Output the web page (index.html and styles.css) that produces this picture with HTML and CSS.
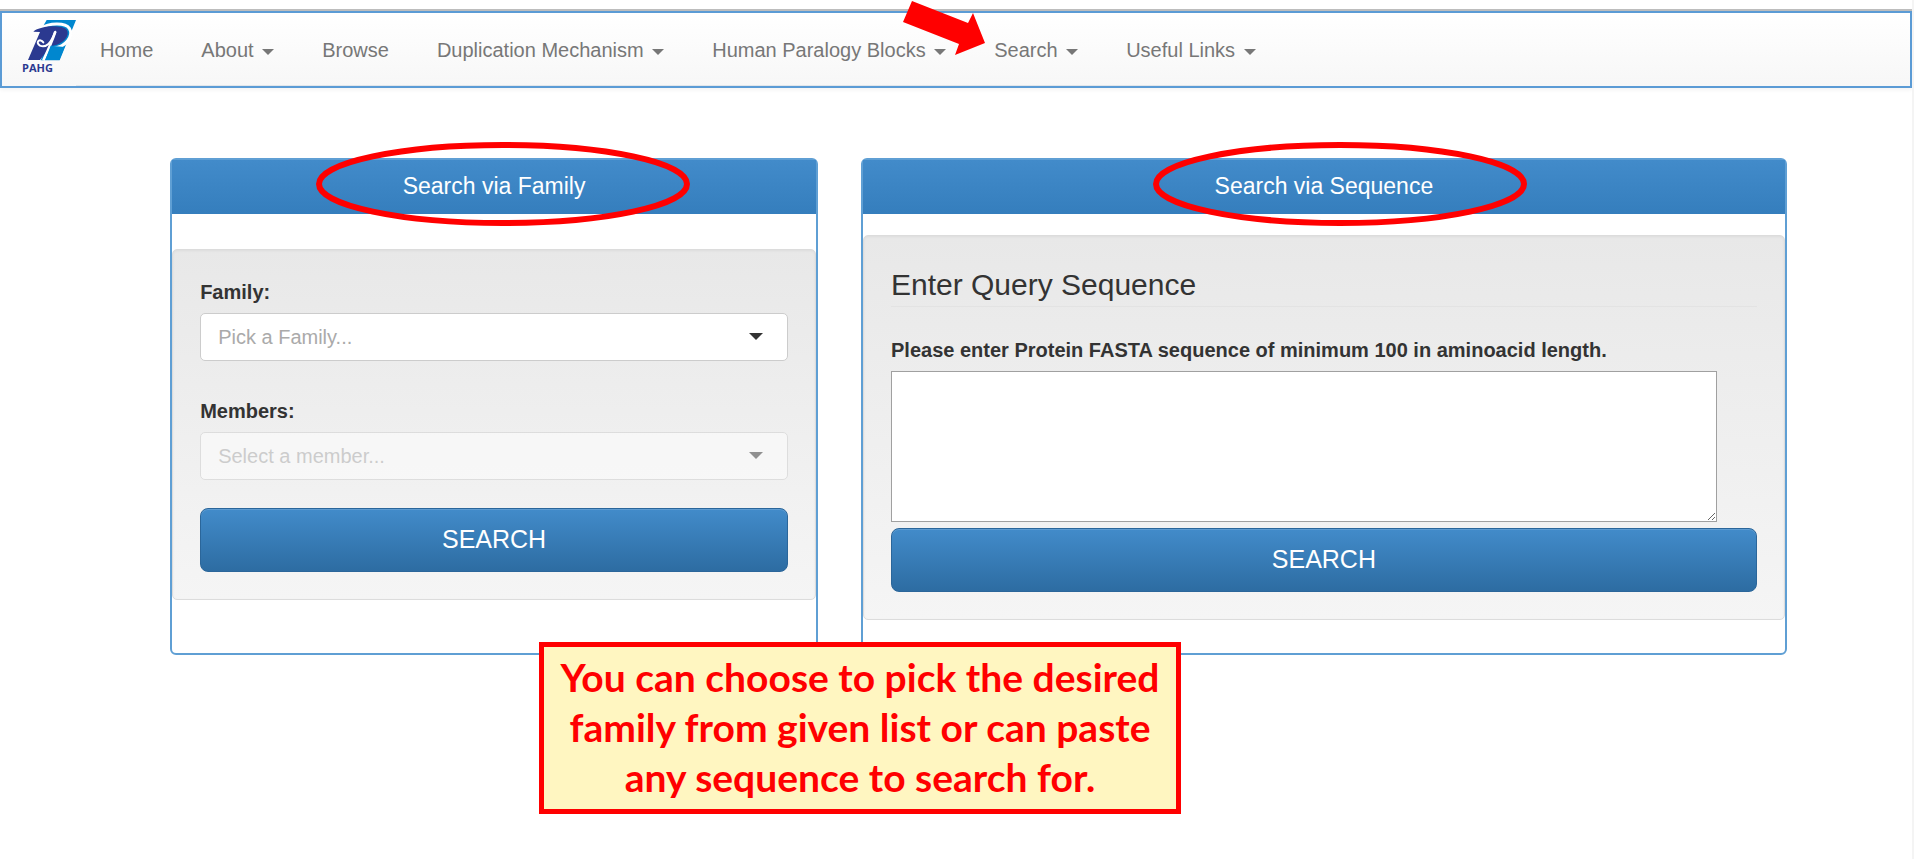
FILE: index.html
```html
<!DOCTYPE html>
<html lang="en">
<head>
<meta charset="utf-8">
<title>PAHG - Search</title>
<link rel="stylesheet" href="styles.css">
</head>
<body>
<header class="navbar">
  <a class="brand" href="#" aria-label="PAHG home">
    <svg class="brand-mark" width="56" height="42" viewBox="12 14 168 126" aria-hidden="true">
      <path d="M86 17H174L125 138H68L100 60L76 34Z" fill="#0087cf"/>
      <path d="M70 42C92 26 142 24 154 42C168 66 142 98 108 101" stroke="#fff" stroke-width="9" fill="none"/>
      <path d="M46 52C66 34 130 30 146 46C158 64 134 92 98 95L66 137H30L66 53Z" fill="#2b3990"/>
      <path d="M112 52C102 82 92 104 76 138" stroke="#fff" stroke-width="8" fill="none"/>
      <path d="M98 94L82 137H124L140 98Z" fill="#0087cf"/>
      <path d="M112 52C100 86 84 102 66 94C50 84 66 70 76 84" stroke="#fff" stroke-width="6" fill="none" stroke-linecap="round"/>
    </svg>
    <span class="brand-name">PAHG</span>
  </a>
  <nav class="menu">
    <a class="menu-item" href="#">Home</a>
    <a class="menu-item" href="#">About <span class="caret"></span></a>
    <a class="menu-item" href="#">Browse</a>
    <a class="menu-item" href="#">Duplication Mechanism <span class="caret"></span></a>
    <a class="menu-item" href="#">Human Paralogy Blocks <span class="caret"></span></a>
    <a class="menu-item menu-item-marked" href="#">Search <span class="caret"></span>
      <svg class="arrow" width="84" height="56" viewBox="903 0 84 56" aria-hidden="true"><path d="M912 1L968 23L973 13L985 43L955 55L959 44L903 22Z" fill="#f00"/></svg>
    </a>
    <a class="menu-item" href="#">Useful Links <span class="caret"></span></a>
  </nav>
</header>

<main class="content">
  <section class="panel panel-family">
    <h2 class="panel-title">Search via Family
      <svg class="ring" width="376" height="86" aria-hidden="true"><ellipse cx="188" cy="43" rx="184" ry="39"/></svg>
    </h2>
    <form class="well">
      <label class="label" for="family">Family:</label>
      <div class="picker">
        <select class="picker-select" id="family"><option>Pick a Family...</option></select>
      </div>
      <label class="label label-next" for="members">Members:</label>
      <div class="picker picker-disabled">
        <select class="picker-select" id="members" disabled><option>Select a member...</option></select>
      </div>
      <button class="button button-spaced" type="button">SEARCH</button>
    </form>
  </section>

  <section class="panel panel-sequence">
    <h2 class="panel-title">Search via Sequence
      <svg class="ring ring-sequence" width="376" height="86" aria-hidden="true"><ellipse cx="188" cy="43" rx="184" ry="39"/></svg>
    </h2>
    <form class="well">
      <h3 class="legend">Enter Query Sequence</h3>
      <label class="label" for="sequence">Please enter Protein FASTA sequence of minimum 100 in aminoacid length.</label>
      <textarea class="sequence" id="sequence"></textarea>
      <button class="button" type="button">SEARCH</button>
    </form>
  </section>

  <aside class="callout">You can choose to pick the desired family from given list or can paste any sequence to search for.</aside>
</main>
</body>
</html>
```
FILE: styles.css
```css
* {
  box-sizing: border-box;
}

body {
  margin: 0;
  padding-top: 11px;
  min-height: 100vh;
  border-right: 2px solid #f4f4f4;
  background: #fff;
  color: #333;
  font: 20px/28px "Liberation Sans", Arial, sans-serif;
}

.navbar {
  display: flex;
  border: 2px solid #5b9bd5;
  box-shadow: 0 -2px 0 #bdbdbd, 0 2px 4px rgba(0, 0, 0, 0.05);
  background: linear-gradient(#fff, #f7f7f7);
}

.brand {
  display: flex;
  flex-direction: column;
  width: 74px;
  padding: 6px 0 0 20px;
  color: #2b3990;
  text-decoration: none;
}

.brand-mark {
  flex: none;
}

.brand-name {
  font: bold 11px/14px "Open Sans", sans-serif;
}

.menu {
  display: flex;
  border-bottom: 1px solid #e2e6ea;
}

.menu-item {
  padding: 23px 24px 21px;
  color: #777;
  text-decoration: none;
  white-space: nowrap;
}

.menu-item-marked {
  position: relative;
}

.caret {
  display: inline-block;
  margin-left: 3px;
  vertical-align: middle;
  border-top: 6px solid #777;
  border-right: 6px solid transparent;
  border-left: 6px solid transparent;
}

.arrow {
  position: absolute;
  left: -67px;
  top: -13px;
}

.content {
  position: relative;
  display: grid;
  grid-template-columns: 648fr 926fr;
  gap: 43px;
  padding: 70px 6.55% 0 8.9%;
}

.panel {
  display: flex;
  flex-direction: column;
  min-height: 497px;
  border: 2px solid #5f9fd4;
  border-radius: 6px;
}

.panel-title {
  position: relative;
  margin: 0;
  padding: 12px 0 14px;
  background: linear-gradient(#428bca, #357ebd);
  color: #fff;
  font-size: 23px;
  font-weight: normal;
  line-height: 28px;
  text-align: center;
}

.ring {
  position: absolute;
  left: calc(50% - 179px);
  top: -19px;
  fill: none;
  stroke: #f00;
  stroke-width: 6px;
}

.ring-sequence {
  left: calc(50% - 172px);
}

.well {
  display: flex;
  flex-direction: column;
  padding: 28px 27px 27px;
  border: 1px solid #dcdcdc;
  border-radius: 5px;
  background: linear-gradient(#e8e8e8, #f5f5f5);
  box-shadow: inset 0 1px 3px rgba(0, 0, 0, 0.05);
}

.panel-family .well {
  margin-top: 35px;
}

.panel-sequence .well {
  margin-top: 21px;
}

.label {
  margin-bottom: 7px;
  font-weight: bold;
}

.label-next {
  margin-top: 36px;
}

.picker {
  position: relative;
}

.picker::after {
  content: "";
  position: absolute;
  right: 25px;
  top: 20px;
  border-top: 7px solid #333;
  border-right: 7px solid transparent;
  border-left: 7px solid transparent;
  pointer-events: none;
}

.picker-select {
  display: block;
  width: 100%;
  height: 48px;
  padding: 0 17px;
  border: 1px solid #ccc;
  border-radius: 5px;
  appearance: none;
  background: #fff;
  color: #aaa;
  font: inherit;
}

.picker-disabled {
  opacity: 0.5;
}

.picker-select:disabled {
  opacity: 1;
}

.button {
  height: 64px;
  padding: 0 0 3px;
  border: 1px solid #2b669a;
  border-radius: 8px;
  background: linear-gradient(#428bca, #2d6ca2);
  box-shadow: inset 0 1px 0 rgba(255, 255, 255, 0.15);
  color: #fff;
  font: 25px/32px "Liberation Sans", Arial, sans-serif;
}

.button-spaced {
  margin-top: 28px;
}

.legend {
  margin: 0 0 29px;
  padding: 3px 0;
  border-bottom: 1px solid #e3e3e3;
  font-size: 30px;
  font-weight: normal;
  line-height: 36px;
}

.sequence {
  width: calc(100% - 40px);
  height: 151px;
  margin-bottom: 6px;
  border: 1px solid #a0a0a0;
  background: #fff;
  font: inherit;
  resize: both;
}

.callout {
  position: absolute;
  left: 539px;
  top: 554px;
  width: 642px;
  padding: 5px 10px 7px;
  border: 5px solid #f00;
  background: #fff6c1;
  color: #f00;
  font: bold 39px/50px Lato, sans-serif;
  text-align: center;
}
```
